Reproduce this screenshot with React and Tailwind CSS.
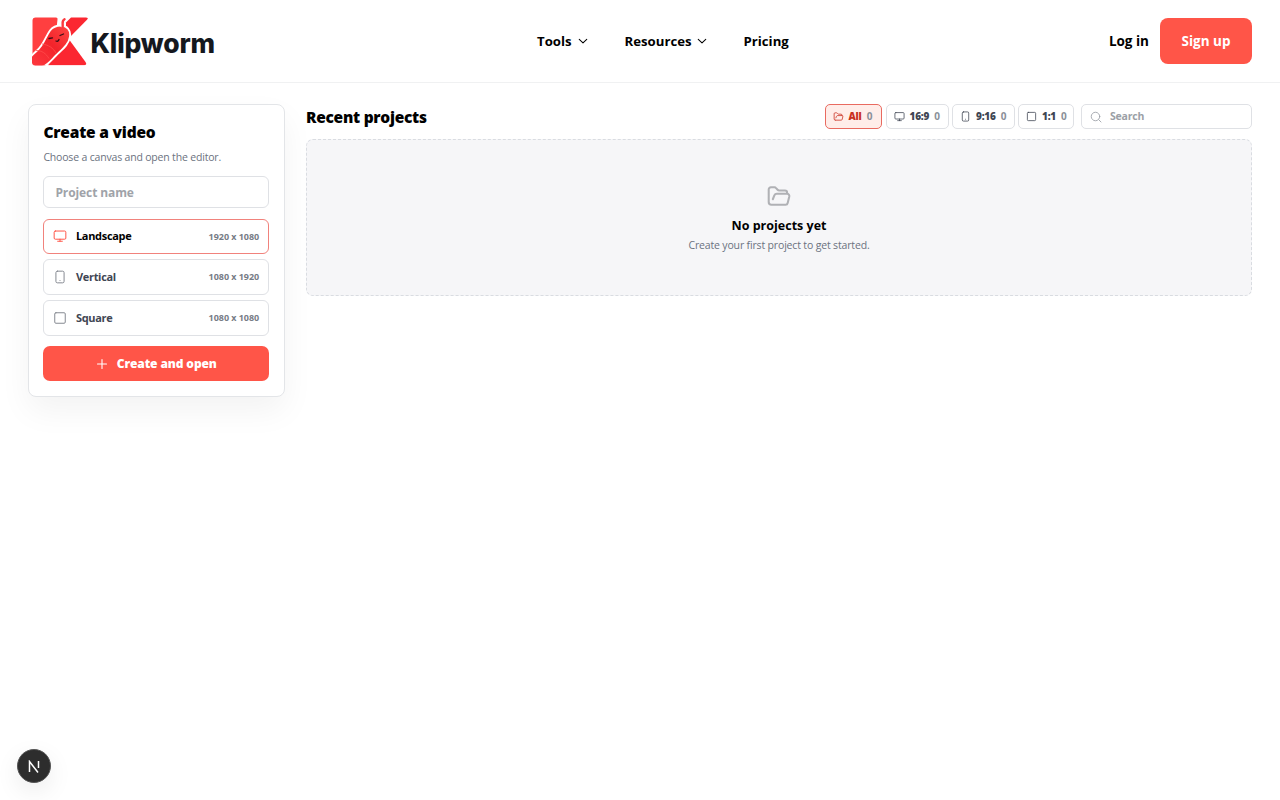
import React from "react";

const ICONS = {
  folder: <path d="M5 20a2.500 2.500 0 0 1-2.500-2.500V6a2 2 0 0 1 2-2h3.300a2 2 0 0 1 1.500.700l1.400 1.500a2 2 0 0 0 1.500.700H17.500a2 2 0 0 1 2 2V10M5 20h13a2 2 0 0 0 2-1.600l1.500-6A2 2 0 0 0 19.500 10H10a2.500 2.500 0 0 0-2.300 1.500L6.300 15" />,
  monitor: <><rect x="2" y="3.500" width="20" height="14" rx="2" /><path d="M12 17.500V21M8 21h8" /></>,
  phone: <><rect x="5" y="2" width="14" height="20" rx="2.500" /><path d="M12 18h.01" /></>,
  square: <rect x="3" y="3" width="18" height="18" rx="2" />,
  search: <><circle cx="11" cy="11" r="8.500" /><path d="m17.500 17.500 4.500 4.500" /></>,
  plus: <path d="M12 3v18M3 12h18" />,
  chevron: <path d="m3 8 9 8.500L21 8" />,
};

function Icon({ name, className, stroke = 1.7 }) {
  return (
    <svg viewBox="0 0 24 24" fill="none" stroke="currentColor" strokeWidth={stroke} strokeLinecap="round" strokeLinejoin="round" className={"shrink-0 " + className}>
      {ICONS[name]}
    </svg>
  );
}

function Logo() {
  return (
    <div className="flex items-center">
      <svg width="57" height="50" viewBox="0 0 57 50" className="mt-px shrink-0">
        <defs>
          <linearGradient id="worm" x1="0" y1="1" x2="1" y2="0">
            <stop offset="0" stopColor="#ff3a40" />
            <stop offset=".55" stopColor="#f2242b" />
            <stop offset="1" stopColor="#ff4845" />
          </linearGradient>
          <clipPath id="mark"><rect x="0" y="0" width="57" height="48.500" rx="3" /></clipPath>
        </defs>
        <g clipPath="url(#mark)">
          <path d="M3.500.500H24q2 0 1.500 2L24 16 12 30 .500 42V3.500q0-3 3-3Z" fill="#ff3f40" />
          <path d="M39 .500h15q3 0 1 2.200L34 24V5.500Z" fill="#fb2731" />
          <path d="M36 21 53.500 45q2 3-1.500 3.300H16L28 30Z" fill="#fb2731" />
          <path d="M.500 36h12v12.300h-9q-3 0-3-3Z" fill="#ff3038" />
          <path d="M29 8.500c6 0 10 5 9 11-1 8-8 13-14 19-5 5-9 11-16 12-6 1-10-3-10-8 0-4 4-6 7-9 7-6 8-13 13-20 3-4 7-5 11-5Z" fill="url(#worm)" stroke="white" strokeWidth="1.900" />
          <path d="M30.500 8c1-2-1-4 2-6" fill="none" stroke="white" strokeWidth="5" strokeLinecap="round" />
          <path d="M30.500 11c1-4-1.500-7 2-8.800" fill="none" stroke="#fb3a3e" strokeWidth="2.400" strokeLinecap="round" />
          <path d="M4 33.500c6 0 10 3 13 8M10 27c7 1 11 4 14 9" fill="none" stroke="#ff4c4b" strokeWidth=".8" />
        </g>
        <path d="m17 21.500 3.500-.700M28 18.500l3.500-1.500M24 24q2 1 3-1.500" fill="none" stroke="#391018" strokeWidth="1.300" strokeLinecap="round" />
      </svg>
      <span className="ml-[1.500px] mt-[3px] font-['Inter',sans-serif] text-[26.500px] leading-8 font-extrabold tracking-[-0.200px] text-[#15181e]">Klipworm</span>
    </div>
  );
}

function CanvasOption({ icon, label, size, active }) {
  return (
    <button className={"flex h-[35.500px] w-full items-center rounded-[6px] border px-[9px] " + (active ? "border-[#f1827c] text-black" : "border-[#dfe1e5] text-[#3f4653]")}>
      <Icon name={icon} className={"h-[14px] w-[14px] " + (active ? "text-[#ff5548]" : "text-[#858991]")} />
      <span className="ml-[8.500px] text-[11px] font-bold tracking-[-0.3px]">{label}</span>
      <span className="ml-auto text-[9px] font-bold tracking-[-0.05px] text-[#777c86]">{size}</span>
    </button>
  );
}

function Filter({ icon, label, active, className }) {
  return (
    <button className={"flex h-[25px] items-center rounded-[5px] border pl-[7px] " + className + (active ? " border-[#e96a60] bg-[#ffede9] text-[#c92f20]" : " border-[#dfe1e5] bg-white text-[#3f4653]")}>
      <Icon name={icon} className="h-[11px] w-[11px]" />
      <span className="ml-[5px] text-[10px] font-extrabold tracking-[-0.2px]">{label}</span>
      <span className="ml-[5px] text-[10px] font-bold text-[#8b9099]">0</span>
    </button>
  );
}

export default function App() {
  return (
    <div className="min-h-screen bg-white font-['Open_Sans','Noto_Sans',sans-serif] text-black">
      <header className="flex h-[83px] items-center border-b border-[#f0f1f2] pr-[28px] pl-[32px]">
        <div className="w-[505px] shrink-0"><Logo /></div>
        <nav className="flex items-center gap-[37px] pt-px text-[13.200px] font-bold">
          <span className="flex items-center gap-[6px]">Tools <Icon name="chevron" className="h-[10px] w-[10px]" stroke={2.500} /></span>
          <span className="flex items-center gap-[5px]">Resources <Icon name="chevron" className="h-[10px] w-[10px]" stroke={2.500} /></span>
          <span>Pricing</span>
        </nav>
        <div className="ml-auto flex items-center gap-[11px] text-[13.500px] font-bold">
          <span className="pt-px">Log in</span>
          <button className="h-[46px] w-[92px] rounded-[8px] bg-[#ff5548] text-white">Sign up</button>
        </div>
      </header>

      <main className="flex items-start gap-[21.500px] px-[28px] pt-[21px]">
        <aside className="h-[293px] w-[256.500px] shrink-0 rounded-[8px] border border-[#e3e5e8] bg-white px-[14.400px] pt-[17px] shadow-[0_14px_32px_rgba(0,0,0,0.05)]">
          <h1 className="text-[15.500px] leading-5 font-extrabold tracking-[-0.2px]">Create a video</h1>
          <p className="mt-[7px] text-[10.500px] leading-4 tracking-[-0.18px] text-[#6b7280]">Choose a canvas and open the editor.</p>
          <div className="mt-[11px] flex h-[32px] items-center rounded-[6px] border border-[#dfe1e5] px-[11px] pt-[2px] text-[12px] font-bold tracking-[-0.1px] text-[#a0a3a9]">Project name</div>
          <div className="mt-[10.500px] flex flex-col gap-[5.400px]">
            <CanvasOption icon="monitor" label="Landscape" size="1920 x 1080" active />
            <CanvasOption icon="phone" label="Vertical" size="1080 x 1920" />
            <CanvasOption icon="square" label="Square" size="1080 x 1080" />
          </div>
          <button className="mt-[10px] flex h-[35.500px] w-full items-center justify-center gap-[9px] rounded-[7px] bg-[#ff5548] text-[12px] font-extrabold tracking-[-0.1px] text-white">
            <Icon name="plus" className="h-[12px] w-[12px]" stroke={2.200} />Create and open
          </button>
        </aside>

        <section className="min-w-0 flex-1">
          <div className="flex h-[25px] items-center">
            <h2 className="mr-auto pt-[2px] text-[15.500px] font-extrabold tracking-[-0.270px]">Recent projects</h2>
            <div className="flex gap-[3.500px]">
              <Filter icon="folder" label="All" active className="w-[57.500px]" />
              <Filter icon="monitor" label="16:9" className="w-[63px]" />
              <Filter icon="phone" label="9:16" className="w-[62.500px]" />
              <Filter icon="square" label="1:1" className="w-[56px]" />
            </div>
            <div className="ml-[7px] flex h-[25px] w-[171px] items-center rounded-[5px] border border-[#dfe1e5] pl-[8px] text-[10.500px] font-bold tracking-[-0.2px] text-[#9b9fa6]">
              <Icon name="search" className="mr-[8px] h-[12px] w-[12px]" /><span className="pt-px">Search</span>
            </div>
          </div>
          <div className="mt-[10px] flex h-[157px] flex-col items-center rounded-[7px] border border-dashed border-[#d9dce1] bg-[#f6f6f8] pt-[43px]">
            <Icon name="folder" className="h-[26px] w-[26px] text-[#b0b1b5]" stroke={1.900} />
            <h3 className="mt-[7.500px] text-[12.500px] leading-[18px] font-bold">No projects yet</h3>
            <p className="mt-[2.500px] text-[10.500px] leading-4 tracking-[-0.160px] text-[#6b7280]">Create your first project to get started.</p>
          </div>
        </section>
      </main>

      <button aria-label="Developer tools" className="fixed bottom-[17px] left-[17px] flex h-[34px] w-[34px] items-center justify-center rounded-full border border-[#555] bg-[#2d2d2d] shadow-[0_8px_24px_rgba(0,0,0,0.08)]">
        <svg width="13" height="13" viewBox="0 0 13 13" fill="none" stroke="white" strokeWidth="1.500">
          <path d="M1.500 12V1.500L10 12.500M10.500 1v7" />
        </svg>
      </button>
    </div>
  );
}
